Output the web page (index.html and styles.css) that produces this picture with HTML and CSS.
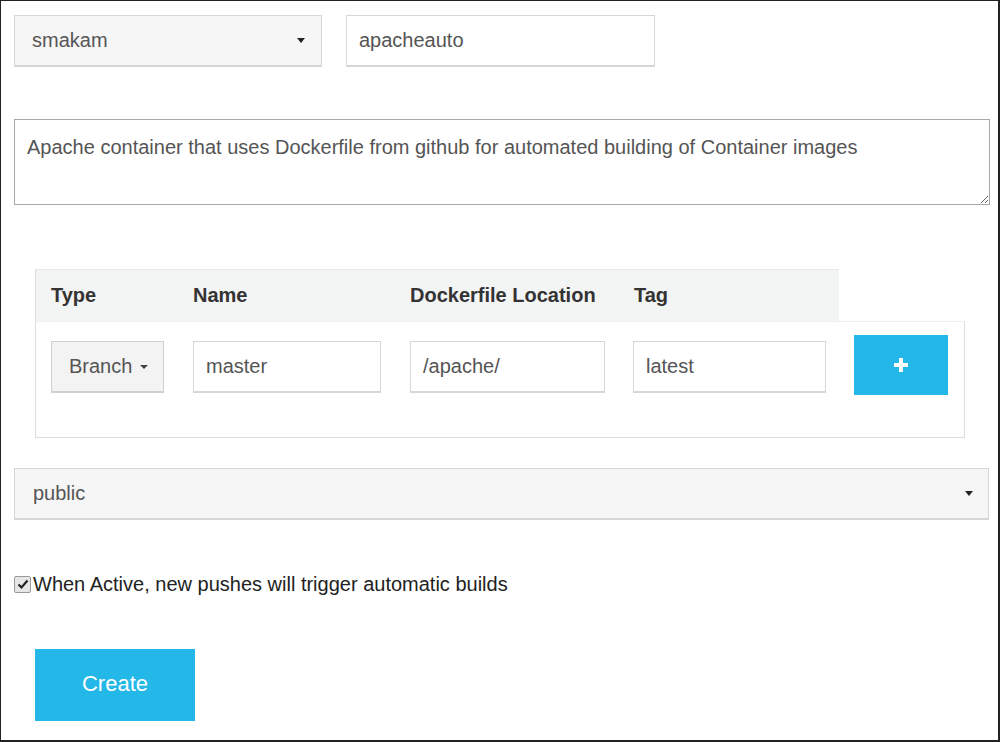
FILE: index.html
```html
<!DOCTYPE html>
<html>
<head>
<meta charset="utf-8">
<link rel="stylesheet" href="styles.css">
</head>
<body>
<div class="frame">
  <div class="row-top">
    <div class="select select-owner"><span>smakam</span><span class="caret"></span></div>
    <div class="input input-name">apacheauto</div>
  </div>
  <textarea class="desc">Apache container that uses Dockerfile from github for automated building of Container images</textarea>
  <div class="builds">
    <div class="builds-head">
      <div>Type</div>
      <div>Name</div>
      <div>Dockerfile Location</div>
      <div>Tag</div>
    </div>
    <div class="builds-body">
      <div class="btn-type"><span>Branch</span><span class="caret caret-sm"></span></div>
      <div class="input cell-name">master</div>
      <div class="input cell-loc">/apache/</div>
      <div class="input cell-tag">latest</div>
      <div class="btn-add"><svg width="14" height="14" viewBox="0 0 14 14"><rect x="5" y="0" width="4" height="14" fill="#fff"/><rect x="0" y="5" width="14" height="4" fill="#fff"/></svg></div>
    </div>
  </div>
  <div class="select select-vis"><span>public</span><span class="caret"></span></div>
  <label class="check-row"><span class="checkbox"><svg width="12" height="12" viewBox="0 0 12 12"><path d="M1.5 6.5 L4.5 9.5 L10.5 2.5" fill="none" stroke="#222" stroke-width="2.2"/></svg></span><span class="check-text">When Active, new pushes will trigger automatic builds</span></label>
  <div class="btn-create">Create</div>
</div>
</body>
</html>
```

FILE: styles.css
```css
html, body {
  margin: 0;
  padding: 0;
  background: #fff;
}

.frame {
  width: 1000px;
  height: 742px;
  box-sizing: border-box;
  border-left: 1px solid #222;
  border-top: 1px solid #222;
  border-right: 2px solid #222;
  border-bottom: 2px solid #222;
  padding: 14px 0 0 13px;
  font-family: "Liberation Sans", Arial, sans-serif;
  font-size: 20px;
  color: #555;
  overflow: hidden;
}

.row-top {
  display: flex;
  gap: 24px;
}

.select {
  box-sizing: border-box;
  height: 52px;
  display: flex;
  align-items: center;
  justify-content: space-between;
  background: #f6f6f6;
  border: 1px solid #d6d6d6;
  border-bottom-width: 2px;
  padding: 0 16px 0 17px;
}

.select-owner {
  width: 308px;
}

.select-vis {
  width: 975px;
  margin-top: 30px;
  padding-left: 18px;
  padding-right: 15px;
}

.caret {
  width: 0;
  height: 0;
  border-left: 4px solid transparent;
  border-right: 4px solid transparent;
  border-top: 5px solid #222;
}

.caret-sm {
  border-left-width: 4px;
  border-right-width: 4px;
  border-top-width: 4px;
  border-top-color: #444;
  margin-left: 8px;
}

.input {
  box-sizing: border-box;
  height: 52px;
  display: flex;
  align-items: center;
  background: #fff;
  border: 1px solid #d6d6d6;
  border-bottom-width: 2px;
  padding-left: 12px;
}

.input-name {
  width: 309px;
}

.desc {
  display: block;
  box-sizing: border-box;
  margin: 52px 0 0 0;
  width: 976px;
  height: 86px;
  border: 1px solid #a9a9a9;
  padding: 16px 12px 12px 12px;
  font-family: "Liberation Sans", Arial, sans-serif;
  font-size: 20px;
  color: #555;
  background: #fff;
  outline: none;
  resize: both;
}

.builds {
  margin: 64px 0 0 21px;
  width: 930px;
}

.builds-head {
  box-sizing: border-box;
  width: 804px;
  height: 52px;
  background: #f3f4f4;
  border-left: 1px solid #ddd;
  border-top: 1px dotted #ddd;
  display: grid;
  grid-template-columns: 142px 217px 224px 1fr;
  align-items: center;
  padding-left: 15px;
  padding-bottom: 1px;
  font-weight: bold;
  color: #333;
}

.builds-body {
  box-sizing: border-box;
  width: 930px;
  height: 117px;
  border: 1px solid #ddd;
  border-top-color: #eee;
  display: grid;
  grid-template-columns: 142px 217px 223px 221px 94px;
  align-items: start;
  padding: 19px 0 0 15px;
}

.btn-type {
  box-sizing: border-box;
  width: 113px;
  height: 52px;
  display: flex;
  align-items: center;
  padding-left: 17px;
  background: #f3f3f3;
  border: 1px solid #d0d0d0;
  border-bottom-width: 2px;
}

.cell-name { width: 188px; }
.cell-loc { width: 195px; }
.cell-tag { width: 193px; }

.btn-add {
  width: 94px;
  height: 60px;
  margin-top: -6px;
  background: #24b8e8;
  display: flex;
  align-items: center;
  justify-content: center;
}

.check-row {
  display: flex;
  align-items: center;
  height: 22px;
  margin-top: 53px;
  margin-left: 0;
  color: #222;
}

.checkbox {
  box-sizing: border-box;
  width: 17px;
  height: 17px;
  border: 1px solid #9a9a9a;
  background: #e6e6e6;
  border-radius: 2px;
  display: flex;
  align-items: center;
  justify-content: center;
  margin-right: 2px;
}

.btn-create {
  width: 160px;
  height: 72px;
  margin: 54px 0 0 21px;
  background: #24b8e8;
  color: #fff;
  font-size: 22px;
  display: flex;
  align-items: center;
  justify-content: center;
  padding-bottom: 2px;
  box-sizing: border-box;
}
```
